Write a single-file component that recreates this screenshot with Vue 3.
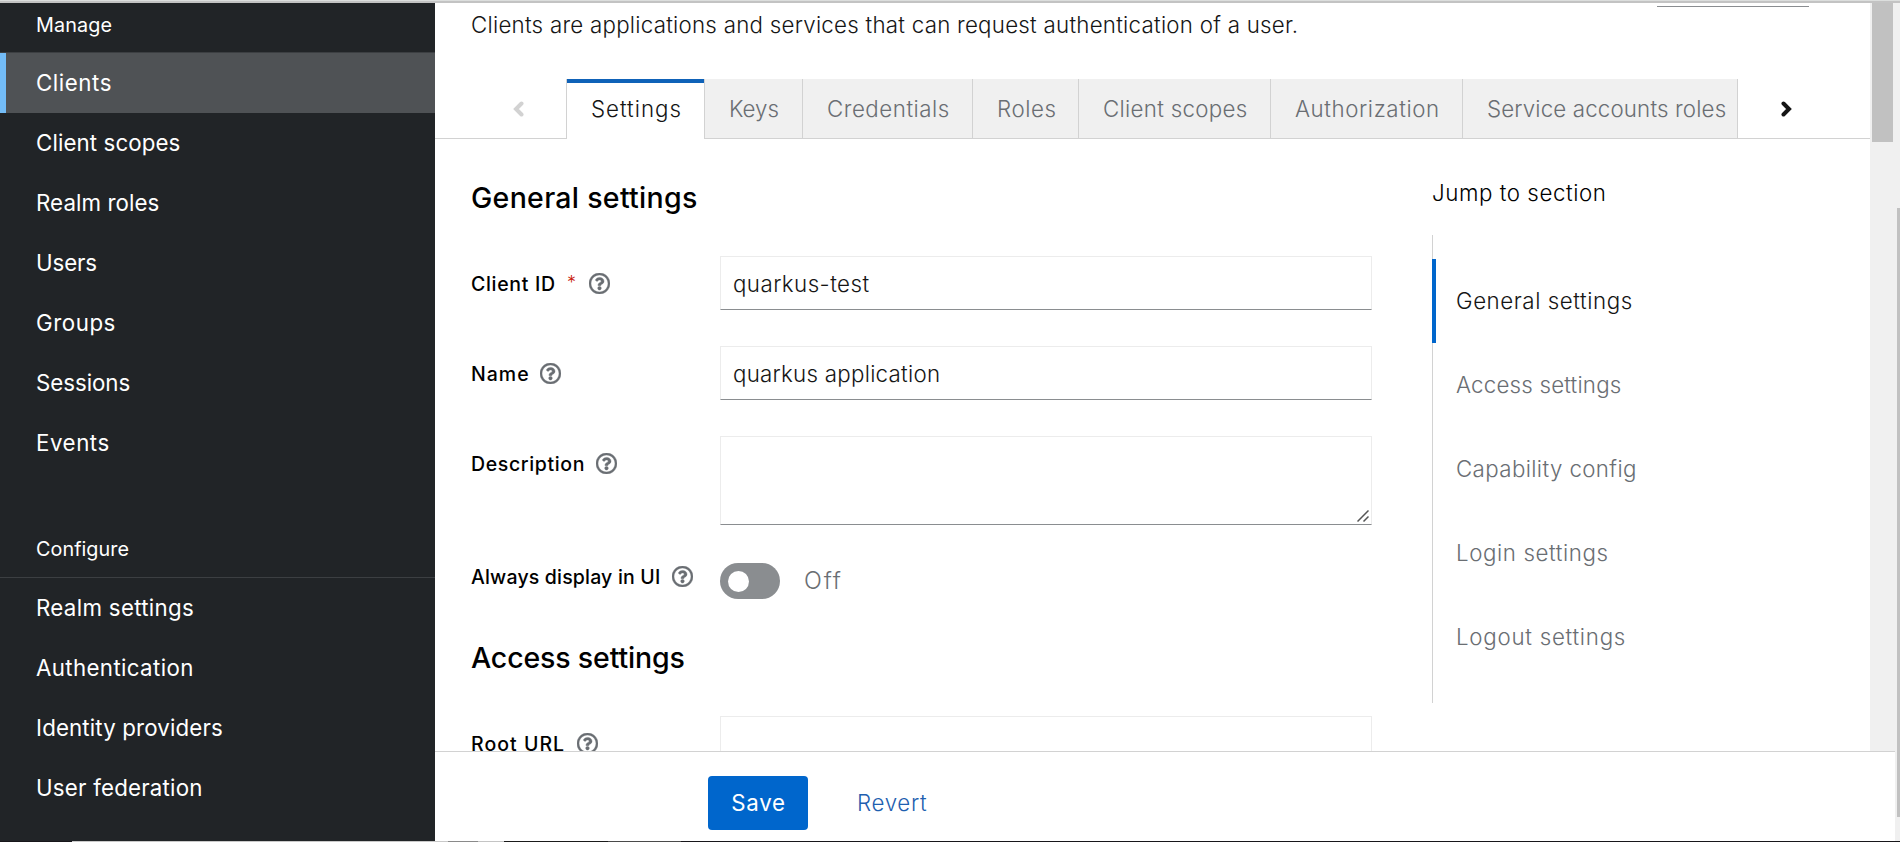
<script setup>
const manage = [
  { label: 'Clients', ls: 0.55, active: true },
  { label: 'Client scopes', ls: 0.1 },
  { label: 'Realm roles', ls: 0.08 },
  { label: 'Users', ls: -0.1 },
  { label: 'Groups', ls: 0.55 },
  { label: 'Sessions', ls: -0.05 },
  { label: 'Events', ls: 0.55 },
]
const configure = [
  { label: 'Realm settings', ls: 0.31 },
  { label: 'Authentication', ls: 0.36 },
  { label: 'Identity providers', ls: 0.14 },
  { label: 'User federation', ls: 0.22 },
]
const tabs = [
  { label: 'Settings', w: 139, ls: 0.98, active: true },
  { label: 'Keys', w: 98, ls: 0 },
  { label: 'Credentials', w: 170, ls: 0.52 },
  { label: 'Roles', w: 106, ls: 0.55 },
  { label: 'Client scopes', w: 192, ls: 0.3 },
  { label: 'Authorization', w: 192, ls: 0.58 },
  { label: 'Service accounts roles', w: 275, ls: 0.15 },
]
const jumps = [
  { label: 'General settings', ls: 0.56, active: true },
  { label: 'Access settings', ls: 0.2 },
  { label: 'Capability config', ls: 0.38 },
  { label: 'Login settings', ls: 0.6 },
  { label: 'Logout settings', ls: 0.74 },
]
const rows = [
  { label: 'Client ID', w: 83, ls: 0.69, required: true, type: 'input', value: 'quarkus-test', vls: 0.45 },
  { label: 'Name', w: 56, ls: 1, type: 'input', value: 'quarkus application', vls: 0.26 },
  { label: 'Description', w: 112, ls: 0.64, type: 'area' },
  { label: 'Always display in UI', w: 188, ls: 0.18, type: 'switch' },
]
const root = { label: 'Root URL', w: 93, ls: 1.04 }
const help =
  'M256 8C119.043 8 8 119.083 8 256c0 136.997 111.043 248 248 248s248-111.003 248-248C504 119.083 392.957 8 256 8zm0 448c-110.532 0-200-89.431-200-200 0-110.495 89.472-200 200-200 110.491 0 200 89.471 200 200 0 110.53-89.431 200-200 200zm107.244-255.2c0 67.052-72.421 68.084-72.421 92.863V300c0 6.627-5.373 12-12 12h-45.647c-6.627 0-12-5.373-12-12v-8.659c0-35.745 27.1-50.034 47.579-61.516 17.561-9.845 28.324-16.541 28.324-29.579 0-17.246-21.999-28.693-39.784-28.693-23.189 0-33.894 10.977-48.942 29.969-4.057 5.12-11.46 6.071-16.666 2.124l-27.824-21.098c-5.107-3.872-6.251-11.066-2.644-16.363C184.846 131.491 214.94 112 261.794 112c49.071 0 101.45 38.304 101.45 88.8zM298 368c0 23.159-18.841 42-42 42s-42-18.841-42-42 18.841-42 42-42 42 18.841 42 42z'
const track = (v) => ({ letterSpacing: v + 'px' })
const box = (r) => ({ letterSpacing: r.ls + 'px', width: r.w + 'px' })
</script>

<template>
  <div class="page">
    <div class="topline"></div>
    <div class="shell">
      <nav class="sidebar">
        <h2 class="group first">Manage</h2>
        <a v-for="n in manage" :key="n.label" class="nav" :class="{ active: n.active }" :style="track(n.ls)">{{ n.label }}</a>
        <h2 class="group second">Configure</h2>
        <a v-for="n in configure" :key="n.label" class="nav" :style="track(n.ls)">{{ n.label }}</a>
      </nav>

      <div class="right">
        <div class="scroller">
          <main class="main">
            <div class="action-edge"></div>
            <p class="intro">Clients are applications and services that can request authentication of a user.</p>
            <div class="tabs">
              <button class="scroll prev">
                <svg width="11" height="16" viewBox="0 0 11 16"><path d="M8.500 2.500 3 8l5.500 5.500" /></svg>
              </button>
              <div v-for="t in tabs" :key="t.label" class="tab" :class="{ active: t.active }" :style="box(t)">{{ t.label }}</div>
              <button class="scroll next">
                <svg width="11" height="16" viewBox="0 0 11 16"><path d="M2.500 2.500 8 8l-5.500 5.500" /></svg>
              </button>
            </div>

            <div class="content">
              <section class="form">
                <h1 class="title general">General settings</h1>
                <div v-for="r in rows" :key="r.label" class="row" :class="r.type">
                  <div class="label">
                    <span class="name" :style="box(r)">{{ r.label }}</span>
                    <span v-if="r.required" class="req">*</span>
                    <svg class="help" viewBox="8 8 496 496"><path :d="help" /></svg>
                  </div>
                  <div v-if="r.type === 'input'" class="field" :style="track(r.vls)">{{ r.value }}</div>
                  <div v-else-if="r.type === 'area'" class="field tall">
                    <svg class="grip" width="12" height="12" viewBox="0 0 12 12"><path d="M.5 11.5 11.5.5M6.5 11.500l5-5" /></svg>
                  </div>
                  <div v-else class="toggle">
                    <span class="pill"><i></i></span>
                    <span class="off">Off</span>
                  </div>
                </div>
                <h1 class="title access">Access settings</h1>
                <div class="row input">
                  <div class="label">
                    <span class="name" :style="box(root)">{{ root.label }}</span>
                    <svg class="help" viewBox="8 8 496 496"><path :d="help" /></svg>
                  </div>
                  <div class="field"></div>
                </div>
              </section>

              <aside class="jump">
                <div class="jump-title">Jump to section</div>
                <div class="jump-list">
                  <a v-for="j in jumps" :key="j.label" class="jump-item" :class="{ active: j.active }" :style="track(j.ls)">{{ j.label }}</a>
                </div>
              </aside>
            </div>
          </main>
          <div class="bar"><div class="thumb"></div></div>
        </div>
        <footer class="footer">
          <button class="save">Save</button>
          <a class="revert">Revert</a>
        </footer>
      </div>
      <div class="outer"><div class="outer-thumb"></div></div>
    </div>
    <div class="bottomline"></div>
  </div>
</template>

<style>
html, body { margin: 0; overflow: hidden; background: #fff; }
</style>

<style scoped>
* { box-sizing: border-box; }
.page {
  width: 1900px; height: 842px; display: flex; flex-direction: column; overflow: hidden;
  font-family: Inter, "Liberation Sans", sans-serif; font-size: 22.3px; font-weight: 300; color: #151515;
  white-space: nowrap;
}
.topline { flex: none; height: 3px; background: linear-gradient(#dcdedd 0 1px, #c3c3c3 1px 3px); }
.bottomline {
  flex: none; height: 1px;
  background: linear-gradient(90deg, #17161a 0 72px, #c9c9c9 72px 448px, #8a8a8a 448px 478px, #c4c4c4 478px 504px, #1a1a1a 504px 608px, #4a4a4a 608px 681px, #17161a 681px);
}
.shell { display: flex; height: 838px; }

.sidebar { width: 435px; flex: none; background: #212427; color: #fff; font-weight: 400; }
.group { margin: 0; padding-left: 36px; font-size: 19.8px; font-weight: 400; }
.first { height: 50px; line-height: 44px; border-bottom: 1px solid #3c3f42; letter-spacing: .1px; }
.second { height: 105px; padding-top: 54px; line-height: 44px; border-bottom: 1px solid #3c3f42; letter-spacing: .05px; }
.nav { display: block; height: 60px; line-height: 59px; padding-left: 36px; }
.nav.active { background: #4f5255; border-left: 6px solid #73bcf7; padding-left: 30px; }

.right { width: 1460px; flex: none; display: flex; flex-direction: column; }
.scroller { height: 748px; display: flex; overflow: hidden; }
.main { width: 1435px; height: 748px; overflow: hidden; }
.action-edge { width: 152px; height: 4px; margin-left: 1222px; border-bottom: 1px solid #8a8d90; }
.intro { margin: 0; height: 72px; line-height: 36px; padding-left: 36px; letter-spacing: .25px; }
.tabs { display: flex; height: 60px; border-bottom: 1px solid #d2d2d2; }
.scroll { border: 0; background: none; padding: 0; height: 59px; display: flex; align-items: center; }
.scroll svg { fill: none; stroke-width: 4; stroke-linejoin: miter; stroke-linecap: round; }
.prev { width: 131px; padding-left: 78px; }
.prev svg { stroke: #d2d2d2; }
.next { width: 120px; padding-left: 43px; }
.next svg { stroke: #151515; }
.tab { flex: none; height: 59px; line-height: 59px; padding-left: 24px; color: #6a6e73; background: #f0f0f0; border-right: 1px solid #d2d2d2; }
.tab.active { height: 60px; background: #fff; color: #151515; border-left: 1px solid #d2d2d2; box-shadow: inset 0 4px #0f62b8; }

.content { display: flex; padding-left: 36px; }
.form { width: 901px; }
.title { margin: 0; font-size: 28.5px; font-weight: 450; line-height: 36px; color: #000; }
.general { padding-top: 41px; height: 117px; letter-spacing: .3px; }
.access { height: 77px; padding-top: 1px; letter-spacing: -.15px; }
.row { display: grid; grid-template-columns: 249px 652px; }
.row.input { height: 90px; }
.row.area { height: 127px; }
.row.switch { height: 76px; }
.label { display: flex; height: 54px; align-items: center; font-size: 19.5px; font-weight: 500; line-height: 24px; color: #000; }
.name { padding-top: 1px; }
.switch .label { height: 27px; }
.switch .name { padding-top: 0; }
.req { width: 9px; margin-left: 13px; margin-right: -9px; color: #c9190b; font-size: 18px; font-weight: 300; line-height: 18px; }
.req + .help { margin-left: 22px; }
.help { width: 21px; height: 21px; margin-left: 13px; fill: #6a6e73; stroke: #6a6e73; stroke-width: 10px; }
.field { height: 54px; line-height: 54px; padding-left: 12px; border: 1px solid #ececec; border-bottom-color: #8a8d90; }
.field.tall { height: 89px; display: flex; justify-content: flex-end; align-items: flex-end; padding: 0 2px 2px 0; }
.grip { fill: none; stroke: #555; stroke-width: 1.5; }
.toggle { display: flex; height: 36px; align-items: center; }
.pill { width: 60px; height: 36px; border-radius: 18px; background: #8a8d90; display: flex; align-items: center; padding-left: 8px; }
.pill i { width: 21px; height: 21px; border-radius: 50%; background: #fff; }
.off { margin-left: 24px; margin-top: -2px; color: #6a6e73; font-size: 23.5px; letter-spacing: 1.8px; }

.jump { margin-left: 60px; width: 400px; }
.jump-title { height: 96px; padding-top: 36px; line-height: 36px; letter-spacing: .56px; color: #000; }
.jump-list { height: 468px; padding: 24px 0; border-left: 1px solid #d2d2d2; }
.jump-item { display: block; height: 84px; line-height: 84px; padding-left: 23px; color: #6a6e73; }
.jump-item.active { margin-left: -1px; padding-left: 20px; border-left: 4px solid #06c; color: #151515; }

.bar { width: 25px; padding-left: 2px; background: #f0f0f0; }
.thumb { width: 21px; height: 139px; background: #c1c1c1; }
.footer { height: 90px; display: flex; padding: 24px 0 0 273px; border-top: 1px solid #d2d2d2; background: #fff; }
.save { width: 100px; height: 54px; border: 0; border-radius: 4px; padding: 0 0 2px 1px; background: #06c; color: #fff; font: 400 22.3px Inter, sans-serif; letter-spacing: .7px; }
.revert { margin-left: 49px; line-height: 54px; color: #1f5fb0; letter-spacing: .68px; }
.outer { width: 5px; padding: 205px 0 0 2px; background: #f0f0f0; }
.outer-thumb { width: 3px; height: 609px; background: #c1c1c1; }
</style>
